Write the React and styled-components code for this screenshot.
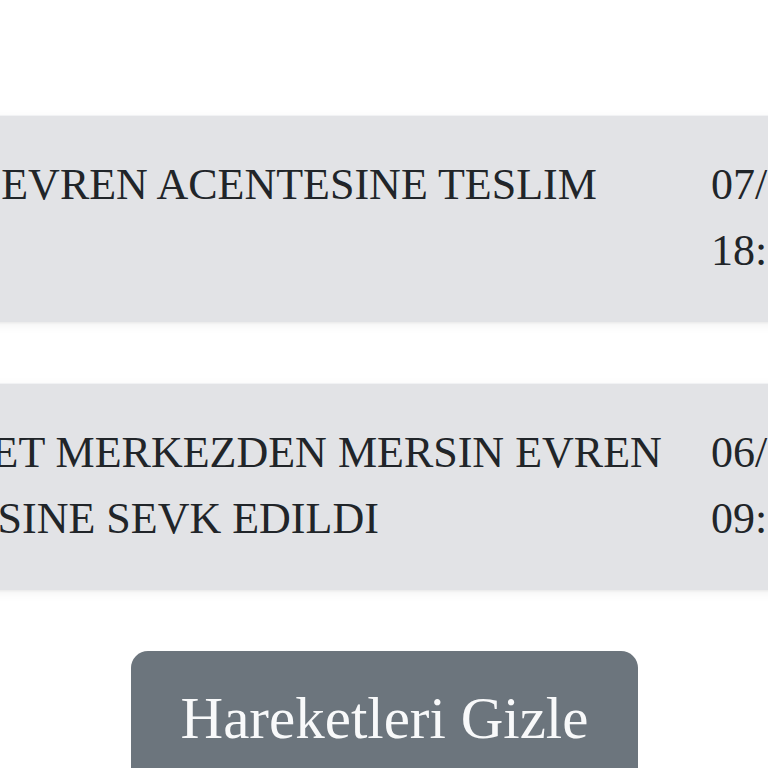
import React from "react";
import styled, { createGlobalStyle } from "styled-components";

const GlobalStyle = createGlobalStyle`
  html, body {
    margin: 0;
    padding: 0;
    background: #ffffff;
    overflow: hidden;
  }
  body {
    font-family: "Liberation Serif", "Times New Roman", serif;
    color: #212529;
  }
`;

const Page = styled.div`
  width: 1209px;
  margin-left: -220px;
  padding-top: 115px;
  display: flex;
  flex-direction: column;
  gap: 61px;
`;

const MovementCard = styled.div`
  display: grid;
  grid-template-columns: 1fr 234px;
  column-gap: 20px;
  padding: 36px 44px 38px;
  background: #e2e3e6;
  border-top: 1px solid #f1f2f4;
  box-shadow: 0 3px 10px rgba(0, 0, 0, 0.06), 0 1px 2px rgba(0, 0, 0, 0.05);
`;

const Description = styled.div`
  font-size: 44px;
  line-height: 66px;
  text-transform: uppercase;
`;

const Stamp = styled.div`
  font-size: 44px;
  line-height: 66px;
`;

const ToggleButton = styled.button`
  align-self: center;
  width: 507px;
  padding: 23px 0 40px;
  border: none;
  border-radius: 17px;
  background: #6c757d;
  color: #f8f9fa;
  font-family: "Liberation Serif", "Times New Roman", serif;
  font-size: 59px;
  line-height: 88px;
  cursor: pointer;
`;

const movements = [
  {
    text: "MERSIN EVREN ACENTESINE TESLIM EDILDI",
    date: "07/10/2023 18:32",
  },
  {
    text: "POSTANET MERKEZDEN MERSIN EVREN ACENTESINE SEVK EDILDI",
    date: "06/10/2023 09:14",
  },
];

const App = () => {
  return (
    <>
      <GlobalStyle />
      <Page>
        {movements.map((m) => (
          <MovementCard key={m.date}>
            <Description>{m.text}</Description>
            <Stamp>{m.date}</Stamp>
          </MovementCard>
        ))}
        <ToggleButton>Hareketleri Gizle</ToggleButton>
      </Page>
    </>
  );
};

export default App;
